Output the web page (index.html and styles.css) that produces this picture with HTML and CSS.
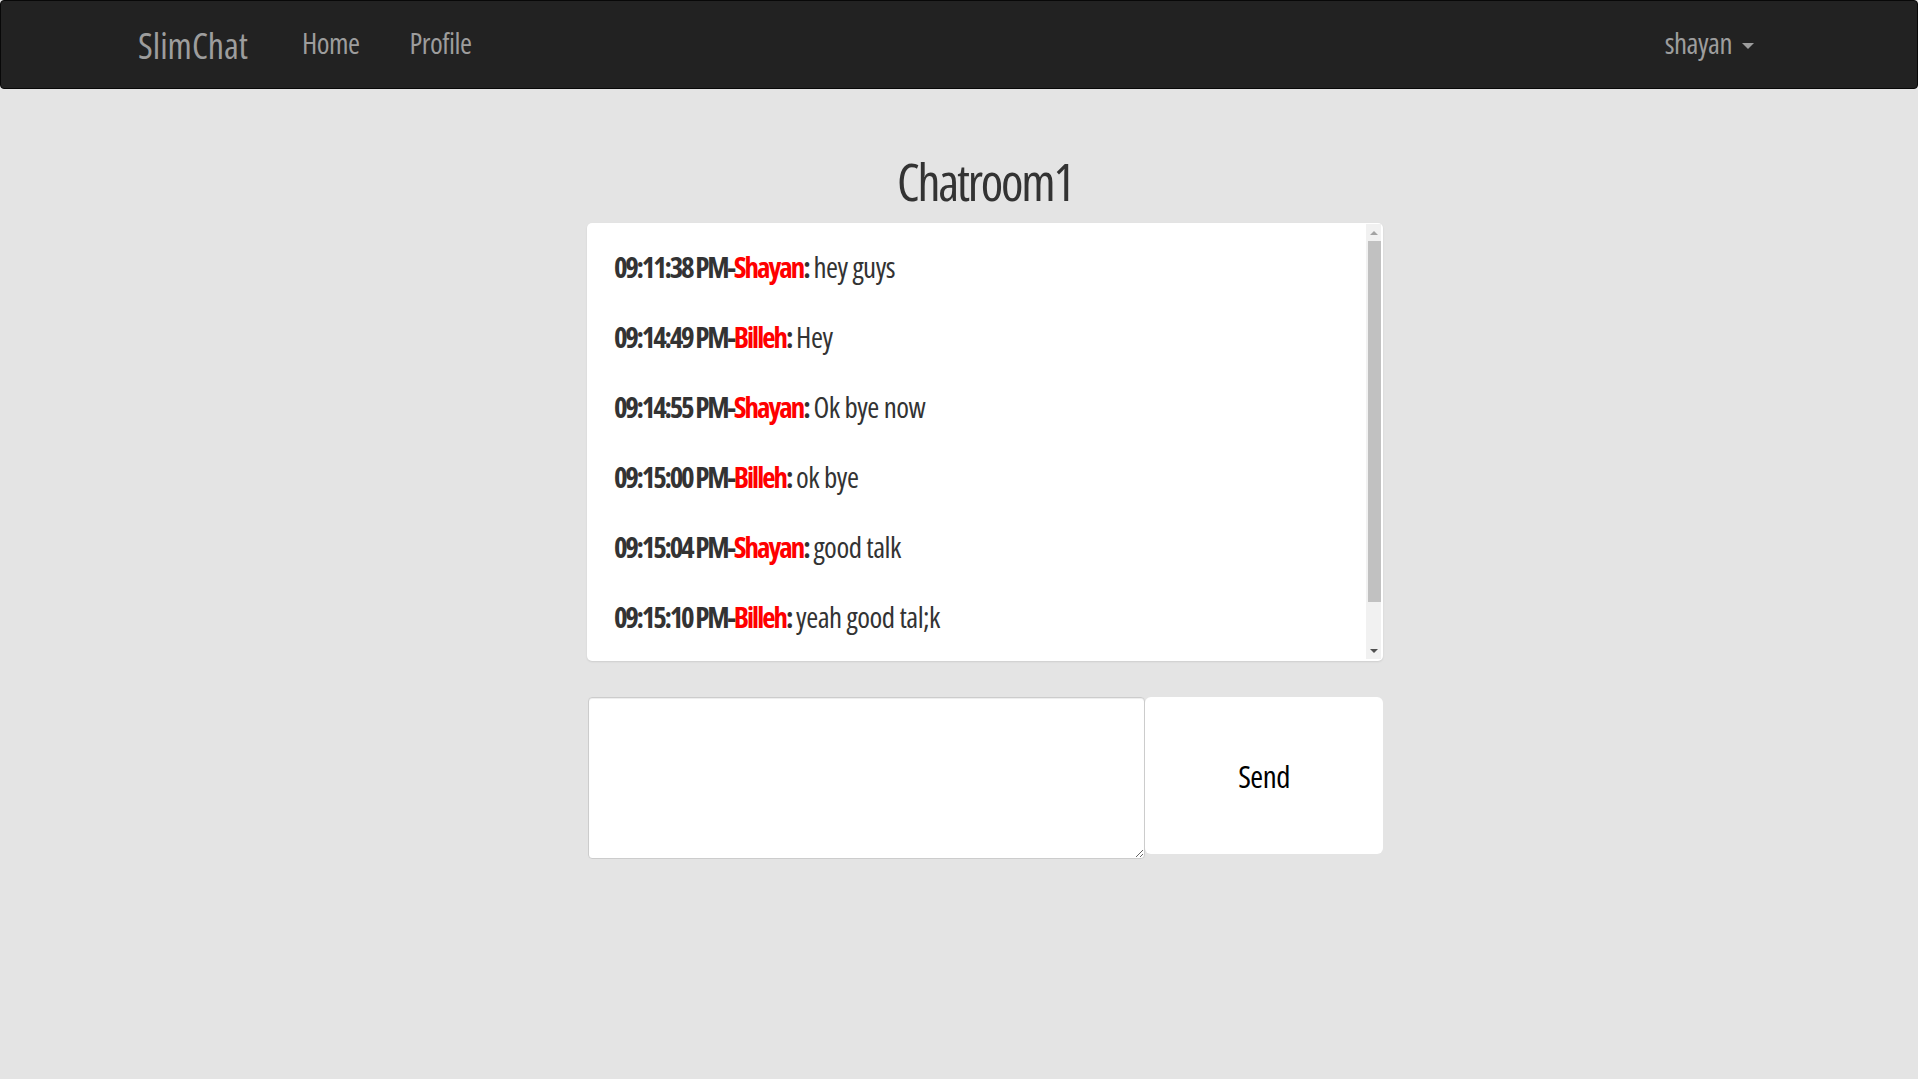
FILE: index.html
```html
<!DOCTYPE html>
<html lang="en">
<head>
<meta charset="utf-8">
<title>SlimChat - Chatroom1</title>
<link rel="stylesheet" href="styles.css">
</head>
<body>
<nav class="navbar">
  <a class="brand" href="#">SlimChat</a>
  <ul class="nav">
    <li><a href="#">Home</a></li>
    <li><a href="#">Profile</a></li>
  </ul>
  <div class="user"><a href="#">shayan <span class="caret"></span></a></div>
</nav>
<main class="page">
  <h1 class="title">Chatroom1</h1>
  <div class="chat">
    <div class="messages">
      <p class="msg"><b>09:11:38 PM-</b><b class="name">Shayan</b><b>:</b> hey guys</p>
      <p class="msg"><b>09:14:49 PM-</b><b class="name">Billeh</b><b>:</b> Hey</p>
      <p class="msg"><b>09:14:55 PM-</b><b class="name">Shayan</b><b>:</b> Ok bye now</p>
      <p class="msg"><b>09:15:00 PM-</b><b class="name">Billeh</b><b>:</b> ok bye</p>
      <p class="msg"><b>09:15:04 PM-</b><b class="name">Shayan</b><b>:</b> good talk</p>
      <p class="msg"><b>09:15:10 PM-</b><b class="name">Billeh</b><b>:</b> yeah good tal;k</p>
    </div>
    <div class="scrollbar" aria-hidden="true">
      <span class="arrow up"></span>
      <span class="thumb"></span>
      <span class="arrow down"></span>
    </div>
  </div>
  <form class="composer">
    <textarea class="input"></textarea>
    <button class="send" type="button">Send</button>
  </form>
</main>
</body>
</html>
```
FILE: styles.css
```css
* { box-sizing: border-box; }
html, body { margin: 0; padding: 0; }
body {
  background: #e4e4e4;
  color: #333;
  font-family: "Open Sans", "Roboto Condensed", sans-serif;
  font-stretch: 75%;
  font-weight: 500;
}
a { text-decoration: none; color: inherit; }

.navbar {
  height: 89px;
  background: #222;
  border: 1px solid #080808;
  border-radius: 4px;
  display: flex;
  align-items: center;
  padding: 0 163px 0 137px;
  color: #9d9d9d;
}
.brand { font-size: 36px; line-height: 49px; margin-right: 54px; margin-top: 1px; }
.nav { list-style: none; margin: 0; padding: 0; display: flex; gap: 50px; flex: 1; }
.nav a, .user a { font-size: 29px; line-height: 40px; display: block; margin-top: -3px; letter-spacing: -0.5px; }
.user a { display: flex; align-items: center; gap: 10px; }
.caret {
  display: inline-block;
  width: 0; height: 0;
  border-left: 6px solid transparent;
  border-right: 6px solid transparent;
  border-top: 6px solid #9d9d9d;
  margin-top: 6px;
}

.page {
  width: 796px;
  margin: 0 auto;
  position: relative;
  left: 26px;
}
.title {
  margin: 64px 0 13px;
  text-align: center;
  font-size: 51px;
  font-weight: 500;
  line-height: 57px;
  letter-spacing: -2.2px;
}
.chat {
  position: relative;
  background: #fff;
  border-radius: 5px;
  height: 438px;
  overflow: hidden;
  box-shadow: 0 1px 2px rgba(0,0,0,0.1);
}
.messages { padding: 9px 27px 0; }
.msg {
  margin: 0;
  font-size: 29px;
  line-height: 70px;
  white-space: nowrap;
  letter-spacing: -0.5px;
}
.msg b { font-weight: 700; letter-spacing: -2.3px; }
.msg b.name { letter-spacing: -2px; }
.name { color: #f00; }

.scrollbar {
  position: absolute;
  top: 1px;
  right: 2px;
  bottom: 2px;
  width: 15px;
  background: #f1f1f1;
  display: flex;
  flex-direction: column;
  align-items: flex-end;
}
.arrow { width: 15px; height: 17px; display: flex; align-items: center; justify-content: center; }
.arrow::after {
  content: "";
  border-left: 4px solid transparent;
  border-right: 4px solid transparent;
}
.up::after { border-bottom: 4px solid #a3a3a3; }
.down::after { border-top: 4px solid #505050; }
.thumb { width: 13px; height: 361px; background: #c1c1c1; }
.down { margin-top: auto; }

.composer { display: flex; margin-top: 36px; align-items: flex-start; }
.input {
  width: 557px;
  height: 162px;
  margin: 0 0 0 1px;
  border: 1px solid #ccc;
  border-radius: 4px;
  box-shadow: inset 0 1px 1px rgba(0,0,0,0.075);
  background: #fff;
  resize: vertical;
}
.send {
  flex: 1;
  height: 157px;
  background: #fff;
  border: none;
  border-radius: 6px;
  font-family: inherit;
  font-stretch: inherit;
  font-weight: 500;
  font-size: 31px;
  letter-spacing: -0.5px;
  color: #000;
}
```
